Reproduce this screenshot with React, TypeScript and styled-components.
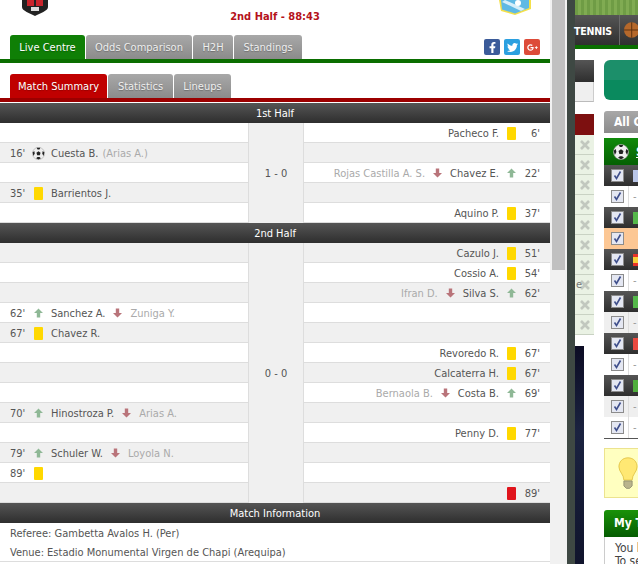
import React from 'react'
import styled, { createGlobalStyle } from 'styled-components'
import { FaFacebookF, FaTwitter, FaGooglePlusG } from 'react-icons/fa'

const GlobalStyle = createGlobalStyle`
  html, body {
    margin: 0;
    padding: 0;
    overflow: hidden;
    background: #fff;
  }
  * {
    box-sizing: border-box;
  }
`

const Page = styled.div`
  display: flex;
  width: 638px;
  height: 564px;
  overflow: hidden;
  font-family: 'DejaVu Sans', Tahoma, sans-serif;
  font-stretch: condensed;
  font-size: 11px;
  color: #555;
`

const Main = styled.div`
  width: 550px;
  flex: none;
  background: #fff;
`

const MatchHead = styled.div`
  position: relative;
  height: 35px;
`

const Clock = styled.div`
  padding-top: 10px;
  text-align: center;
  font-size: 11px;
  font-weight: bold;
  color: #b5121b;
`

const Crest = styled.svg<{ $side: 'left' | 'right' }>`
  position: absolute;
  top: 0;
  ${(p) => (p.$side === 'left' ? 'left: 22px;' : 'left: 499px;')}
`

const TabRow = styled.div<{ $color: string }>`
  position: relative;
  display: flex;
  gap: 1px;
  padding-left: 10px;
  height: 28px;
  border-bottom: 4px solid ${(p) => p.$color};
`

const Tab = styled.div<{ $width: number; $active?: string }>`
  width: ${(p) => p.$width}px;
  height: 24px;
  border-radius: 3px 3px 0 0;
  text-align: center;
  line-height: 26px;
  font-size: 11px;
  color: ${(p) => (p.$active ? '#fff' : '#eee')};
  background: ${(p) =>
    p.$active
      ? `linear-gradient(${p.$active}, ${p.$active})`
      : 'linear-gradient(#a8a8a8, #8b8b8b)'};
  text-shadow: 0 1px 1px rgba(0, 0, 0, 0.25);
`

const Socials = styled.div`
  position: absolute;
  top: 4px;
  left: 484px;
  display: flex;
  gap: 4px;
`

const Social = styled.div<{ $color: string }>`
  display: flex;
  align-items: center;
  justify-content: center;
  width: 16px;
  height: 16px;
  border-radius: 2px;
  color: #fff;
  font-size: 11px;
  background: ${(p) => p.$color};
`

const SubTabs = styled.div`
  margin: 11px 0 1px;
`

const SectionBar = styled.div`
  height: 20px;
  line-height: 21px;
  text-align: center;
  font-size: 11px;
  color: #fff;
  background: linear-gradient(#555, #2e2e2e);
`

const SectionGrid = styled.div`
  display: grid;
  grid-template-columns: 248px 56px 246px;
  grid-auto-rows: 20px;
`

const ScoreCell = styled.div<{ $rows: number }>`
  grid-column: 2;
  grid-row: 1 / span ${(p) => p.$rows};
  display: flex;
  align-items: center;
  justify-content: center;
  background: #f0f0f0;
  border-left: 1px solid #ddd;
  border-right: 1px solid #ddd;
`

const EventCell = styled.div<{ $side: 'left' | 'right'; $shaded: boolean }>`
  grid-column: ${(p) => (p.$side === 'left' ? 1 : 3)};
  display: flex;
  flex-direction: ${(p) => (p.$side === 'left' ? 'row' : 'row-reverse')};
  align-items: center;
  gap: 8px;
  padding: 1px 10px 0;
  white-space: nowrap;
  background: ${(p) => (p.$shaded ? '#f0f0f0' : '#fff')};
  border-bottom: 1px solid #ddd;
`

const Minute = styled.span<{ $side: 'left' | 'right' }>`
  width: 16px;
  flex: none;
  text-align: ${(p) => p.$side};
`

const IconSlot = styled.span`
  display: flex;
  align-items: center;
  justify-content: center;
  width: 9px;
  height: 13px;
  flex: none;
`

const Card = styled.span<{ $color: string }>`
  display: block;
  width: 9px;
  height: 13px;
  border-radius: 1px;
  background: ${(p) => p.$color};
`

const Assist = styled.span`
  color: #aaa;
  margin-left: -4px;
`

const Off = styled.span`
  color: #aaa;
`

const InfoLines = styled.div`
  padding: 1px 10px 0;
  border-bottom: 1px solid #ddd;
  height: 39px;
`

const InfoLine = styled.div`
  height: 19px;
  line-height: 19px;
`

const Gutter = styled.div`
  position: relative;
  width: 17px;
  flex: none;
  background: #f1f1f1;
`

const Thumb = styled.div`
  position: absolute;
  top: 0;
  left: 2px;
  width: 13px;
  height: 270px;
  background: #c0c0c0;
`

const Divider = styled.div`
  width: 8px;
  flex: none;
  background: #3e4843;
`

const Side = styled.div`
  flex: 1;
  min-width: 0;
  display: flex;
  flex-direction: column;
  background: #fff;
`

const Grass = styled.div`
  height: 15px;
  flex: none;
  background: repeating-linear-gradient(90deg, #6f9c45 0 3px, #80ab52 3px 6px);
`

const Nav = styled.div`
  display: flex;
  align-items: center;
  height: 34px;
  flex: none;
  border-bottom: 4px solid #0a6e00;
  background: linear-gradient(#555, #2f2f2f);
`

const NavLabel = styled.div`
  width: 47px;
  height: 30px;
  margin-left: -1px;
  line-height: 33px;
  font-size: 10.5px;
  font-weight: bold;
  text-align: left;
  color: #fff;
  border-right: 1px solid #6a6a6a;
  letter-spacing: -0.2px;
`

const SideBody = styled.div`
  display: flex;
  gap: 10px;
  flex: none;
  height: 515px;
`

const NarrowCol = styled.div`
  width: 19px;
  flex: none;
  display: flex;
  flex-direction: column;
`

const GreyHead = styled.div`
  height: 22px;
  flex: none;
  margin-top: 11px;
  background: linear-gradient(#555, #2e2e2e);
`

const GreyPanel = styled.div`
  height: 20px;
  flex: none;
  background: #efefef;
  border-bottom: 1px solid #bbb;
  border-right: 1px solid #ccc;
`

const RedHead = styled.div`
  height: 21px;
  flex: none;
  margin-top: 12px;
  background: #7d1010;
`

const RemoveRow = styled.div`
  position: relative;
  height: 20px;
  flex: none;
  display: flex;
  align-items: center;
  justify-content: center;
  background: #eaf2e4;
  border-bottom: 1px solid #c9d2c3;
  font-size: 11px;
`

const StrayLetter = styled.span`
  position: absolute;
  left: 1px;
  color: #777;
`

const NavyStrip = styled.div`
  width: 9px;
  flex: 1;
  margin-top: 11px;
  background: linear-gradient(#0c0c24, #1b2340 40%, #10142c);
`

const WideCol = styled.div`
  flex: 1;
  min-width: 0;
  padding-top: 11px;
  overflow: hidden;
`

const SportButton = styled.div`
  height: 40px;
  border-radius: 6px 0 0 6px;
  background: linear-gradient(#1c8f6a 50%, #0a8a5e 50%);
`

const AllTab = styled.div`
  margin-top: 11px;
  height: 22px;
  padding-left: 10px;
  line-height: 23px;
  font-size: 12px;
  font-weight: bold;
  color: #fff;
  white-space: nowrap;
  border-radius: 3px 0 0 0;
  background: linear-gradient(#a8a8a8, #8b8b8b);
`

const LeagueHead = styled.div`
  display: flex;
  align-items: center;
  height: 27px;
  margin-top: 5px;
  padding-left: 9px;
  gap: 7px;
  font-size: 12px;
  font-weight: bold;
  text-decoration: underline;
  color: #fff;
  background: linear-gradient(#0f8a0a, #056003);
`

type Tone = 'dark' | 'white' | 'grey' | 'orange'

const CheckRow = styled.div<{ $tone: Tone }>`
  display: flex;
  align-items: center;
  height: 21px;
  background: ${(p) =>
    ({
      dark: 'linear-gradient(#555, #2e2e2e)',
      white: '#fff',
      grey: '#efefef',
      orange: '#fcc794',
    })[p.$tone]};
`

const CheckCell = styled.span<{ $ruled: boolean }>`
  display: flex;
  align-items: center;
  width: 25px;
  height: 21px;
  padding-left: 7px;
  flex: none;
  border-right: 1px solid ${(p) => (p.$ruled ? '#ddd' : 'transparent')};
`

const CheckBox = styled.span`
  display: flex;
  align-items: center;
  justify-content: center;
  width: 13px;
  height: 13px;
  background: #e4e7f2;
  border: 1px solid #8c8c8c;
`

const Flag = styled.span<{ $color: string }>`
  width: 8px;
  height: 12px;
  margin-left: 4px;
  background: ${(p) => p.$color};
`

const Dash = styled.span`
  margin-left: 4px;
  color: #999;
`

const CheckList = styled.div`
  border-bottom: 1px solid #555;
`

const Hint = styled.div`
  display: flex;
  align-items: center;
  padding-left: 13px;
  height: 50px;
  margin-top: 9px;
  background: #ffffc0;
  border: 1px solid #ece38f;
  border-right: none;
`

const TeamsHead = styled.div`
  height: 27px;
  margin-top: 12px;
  padding-left: 10px;
  line-height: 27px;
  font-size: 12px;
  font-weight: bold;
  color: #fff;
  white-space: nowrap;
  border-radius: 3px 0 0 0;
  background: linear-gradient(#1a9208, #055c02);
`

const TeamsBody = styled.div`
  padding: 5px 0 0 10px;
  border-left: 1px solid #ccc;
  font-size: 12px;
  line-height: 13px;
  white-space: nowrap;
  color: #444;
`

type Kind = 'yellow' | 'red' | 'goal' | 'sub'

type MatchEvent = {
  minute: string
  kind: Kind
  name?: string
  assist?: string
  off?: string
}

type Row = { left?: MatchEvent; right?: MatchEvent }

const firstHalf: Row[] = [
  { right: { minute: "6'", kind: 'yellow', name: 'Pacheco F.' } },
  { left: { minute: "16'", kind: 'goal', name: 'Cuesta B.', assist: '(Arias A.)' } },
  { right: { minute: "22'", kind: 'sub', name: 'Chavez E.', off: 'Rojas Castilla A. S.' } },
  { left: { minute: "35'", kind: 'yellow', name: 'Barrientos J.' } },
  { right: { minute: "37'", kind: 'yellow', name: 'Aquino P.' } },
]

const secondHalf: Row[] = [
  { right: { minute: "51'", kind: 'yellow', name: 'Cazulo J.' } },
  { right: { minute: "54'", kind: 'yellow', name: 'Cossio A.' } },
  { right: { minute: "62'", kind: 'sub', name: 'Silva S.', off: 'Ifran D.' } },
  { left: { minute: "62'", kind: 'sub', name: 'Sanchez A.', off: 'Zuniga Y.' } },
  { left: { minute: "67'", kind: 'yellow', name: 'Chavez R.' } },
  { right: { minute: "67'", kind: 'yellow', name: 'Revoredo R.' } },
  { right: { minute: "67'", kind: 'yellow', name: 'Calcaterra H.' } },
  { right: { minute: "69'", kind: 'sub', name: 'Costa B.', off: 'Bernaola B.' } },
  { left: { minute: "70'", kind: 'sub', name: 'Hinostroza P.', off: 'Arias A.' } },
  { right: { minute: "77'", kind: 'yellow', name: 'Penny D.' } },
  { left: { minute: "79'", kind: 'sub', name: 'Schuler W.', off: 'Loyola N.' } },
  { left: { minute: "89'", kind: 'yellow' } },
  { right: { minute: "89'", kind: 'red' } },
]

const spain = 'linear-gradient(#e8342a 25%, #f7d038 25% 75%, #e8342a 75%)'

const checkRows: { tone: Tone; flag?: string }[] = [
  { tone: 'dark', flag: '#b9c6e8' },
  { tone: 'white' },
  { tone: 'dark', flag: '#55b84a' },
  { tone: 'orange' },
  { tone: 'dark', flag: spain },
  { tone: 'white' },
  { tone: 'dark', flag: '#55b84a' },
  { tone: 'grey' },
  { tone: 'dark', flag: '#ea4a40' },
  { tone: 'white' },
  { tone: 'dark', flag: '#4fae3c' },
  { tone: 'grey' },
  { tone: 'white' },
]

function Arrow({ up }: { up: boolean }) {
  return (
    <svg width="9" height="10" viewBox="0 0 9 10">
      <path
        d={up ? 'M4.5 0.5 9 5H6.2V9.5H2.8V5H0Z' : 'M4.5 9.5 9 5H6.2V0.5H2.8V5H0Z'}
        fill={up ? '#8fb896' : '#b9747a'}
      />
    </svg>
  )
}

function Ball({ size = 13 }: { size?: number }) {
  return (
    <svg width={size} height={size} viewBox="0 0 14 14" style={{ flex: 'none' }}>
      <circle cx="7" cy="7" r="6.6" fill="#eee" stroke="#999" strokeWidth="0.5" />
      <path d="M7 4.6 9.2 6.2 8.4 8.8H5.6L4.8 6.2Z" fill="#222" />
      <path d="M5 .8 9 .8 8 2.6H6ZM.6 6 2.4 4.4 3 7 1.6 9.6ZM13.4 6 11.6 4.4 11 7 12.4 9.6ZM4.4 12 6 10.8H8L9.6 12 7 13.4Z" fill="#222" />
    </svg>
  )
}

function EventIcon({ kind }: { kind: Kind }) {
  if (kind === 'yellow') return <Card $color="#ffd800" />
  if (kind === 'red') return <Card $color="#e0141c" />
  if (kind === 'goal') return <Ball />
  return <Arrow up />
}

function Event({ side, event, shaded }: { side: 'left' | 'right'; event?: MatchEvent; shaded: boolean }) {
  return (
    <EventCell $side={side} $shaded={shaded}>
      {event && (
        <>
          <Minute $side={side}>{event.minute}</Minute>
          <IconSlot>
            <EventIcon kind={event.kind} />
          </IconSlot>
          {event.name && <span>{event.name}</span>}
          {event.assist && <Assist>{event.assist}</Assist>}
          {event.off && <Arrow up={false} />}
          {event.off && <Off>{event.off}</Off>}
        </>
      )}
    </EventCell>
  )
}

function Period({ rows, score, shadeOdd }: { rows: Row[]; score: string; shadeOdd: boolean }) {
  return (
    <SectionGrid>
      <ScoreCell $rows={rows.length}>{score}</ScoreCell>
      {rows.map((row, i) => {
        const shaded = shadeOdd ? i % 2 === 1 : i % 2 === 0
        return (
          <React.Fragment key={i}>
            <Event side="left" event={row.left} shaded={shaded} />
            <Event side="right" event={row.right} shaded={shaded} />
          </React.Fragment>
        )
      })}
    </SectionGrid>
  )
}

export default function App() {
  return (
    <Page>
      <GlobalStyle />
      <Main>
        <MatchHead>
          <Crest $side="left" width="26" height="16" viewBox="0 0 26 16">
            <path d="M0 0H26V7C26 11 18 13 13 16 8 13 0 11 0 7Z" fill="#222" />
            <path d="M5 0H12V6H5ZM14 0H21V6H14Z" fill="#c9242c" />
            <path d="M9 7H17V11H9Z" fill="#ddd" />
          </Crest>
          <Clock>2nd Half - 88:43</Clock>
          <Crest $side="right" width="32" height="16" viewBox="0 0 32 16">
            <path d="M0 0H32V9L16 15 2 11Z" fill="#f4e04a" />
            <path d="M2 0H30V8L16 13.5 3 9.5Z" fill="#5fb9e4" />
            <path d="M6 0 26 9 22 11 3 2Z" fill="#d6eef9" />
            <circle cx="19" cy="3" r="3" fill="#fff" />
          </Crest>
        </MatchHead>
        <TabRow $color="#0a6e00">
          <Tab $width={75} $active="#0f7f06">Live Centre</Tab>
          <Tab $width={106}>Odds Comparison</Tab>
          <Tab $width={40}>H2H</Tab>
          <Tab $width={68}>Standings</Tab>
          <Socials>
            <Social $color="#3b5b99"><FaFacebookF /></Social>
            <Social $color="#2ba0e0"><FaTwitter /></Social>
            <Social $color="#dd4b39"><FaGooglePlusG /></Social>
          </Socials>
        </TabRow>
        <SubTabs>
          <TabRow $color="#9c0000">
            <Tab $width={97} $active="#c00000">Match Summary</Tab>
            <Tab $width={65}>Statistics</Tab>
            <Tab $width={57}>Lineups</Tab>
          </TabRow>
        </SubTabs>
        <SectionBar>1st Half</SectionBar>
        <Period rows={firstHalf} score="1 - 0" shadeOdd />
        <SectionBar>2nd Half</SectionBar>
        <Period rows={secondHalf} score="0 - 0" shadeOdd={false} />
        <SectionBar>Match Information</SectionBar>
        <InfoLines>
          <InfoLine>Referee: Gambetta Avalos H. (Per)</InfoLine>
          <InfoLine>Venue: Estadio Monumental Virgen de Chapi (Arequipa)</InfoLine>
        </InfoLines>
      </Main>
      <Gutter>
        <Thumb />
      </Gutter>
      <Divider />
      <Side>
        <Grass />
        <Nav>
          <NavLabel>TENNIS</NavLabel>
          <svg width="16" height="18" viewBox="0 0 16 18" style={{ marginLeft: 3 }}>
            <circle cx="9" cy="9" r="8" fill="#b5682b" />
            <path d="M1 9H17M9 1V17" stroke="#5c3110" fill="none" />
          </svg>
        </Nav>
        <SideBody>
          <NarrowCol>
            <GreyHead />
            <GreyPanel />
            <RedHead />
            {Array.from({ length: 10 }, (_, i) => (
              <RemoveRow key={i}>
                {i === 7 && <StrayLetter>e</StrayLetter>}
                <svg width="10" height="10" viewBox="0 0 10 10">
                  <path d="M1 1 9 9M9 1 1 9" stroke="#c2c8bf" strokeWidth="2.6" />
                </svg>
              </RemoveRow>
            ))}
            <NavyStrip />
          </NarrowCol>
          <WideCol>
            <SportButton />
            <AllTab>All Games</AllTab>
            <LeagueHead>
              <Ball size={16} />
              <span>Soccer</span>
            </LeagueHead>
            <CheckList>
              {checkRows.map((row, i) => (
                <CheckRow key={i} $tone={row.tone}>
                  <CheckCell $ruled={row.tone !== 'dark' && row.tone !== 'orange'}>
                    <CheckBox>
                      <svg width="11" height="11" viewBox="0 0 11 11">
                        <path d="M2.5 5.5 4.5 8.5 8.5 1.5" stroke="#3f4f8c" strokeWidth="1.6" fill="none" />
                      </svg>
                    </CheckBox>
                  </CheckCell>
                  {row.flag ? <Flag $color={row.flag} /> : row.tone !== 'orange' && <Dash>-</Dash>}
                </CheckRow>
              ))}
            </CheckList>
            <Hint>
              <svg width="21" height="33" viewBox="0 0 24 40">
                <path d="M12 1C5 1 1 6 1 12 1 18 7 21 7 28H17C17 21 23 18 23 12 23 6 19 1 12 1Z" fill="#ffe873" stroke="#e0c040" />
                <path d="M7 29H17V35L14 38H10L7 35Z" fill="#b9b48c" stroke="#8c8a6c" />
              </svg>
            </Hint>
            <TeamsHead>My Teams</TeamsHead>
            <TeamsBody>
              You have
              <br />
              To select
            </TeamsBody>
          </WideCol>
        </SideBody>
      </Side>
    </Page>
  )
}
